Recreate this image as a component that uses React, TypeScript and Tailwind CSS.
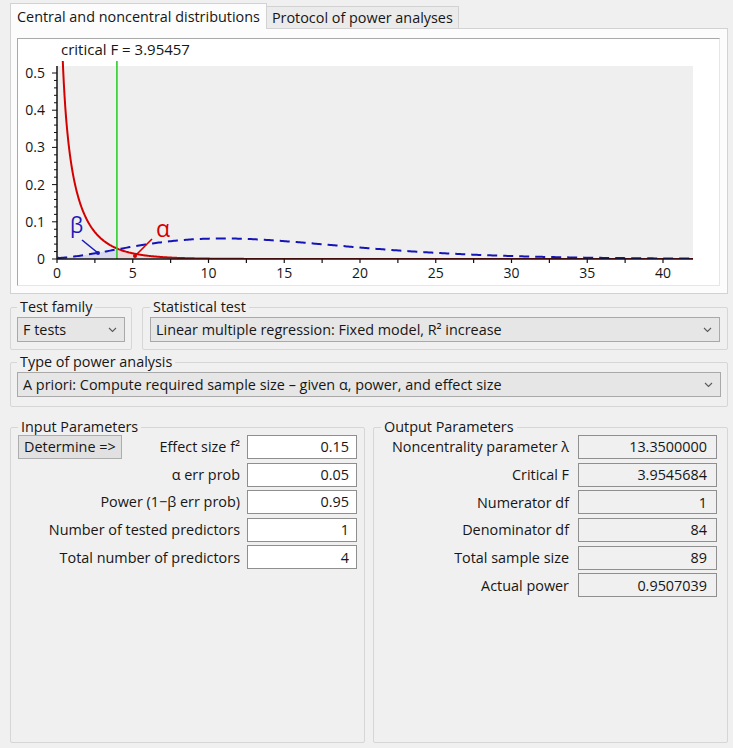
import React from "react";

// plot geometry (svg coords inside the chart box)
const X0 = 39;
const Y0 = 220;
const TOP = 27;
const RIGHT = 675;
const XS = 15.15;
const YS = 372;
const CRIT = 3.95457;

const lgamma = (z: number): number => {
  const c = [
    0.99999999999980993, 676.5203681218851, -1259.1392167224028, 771.32342877765313,
    -176.61502916214059, 12.507343278686905, -0.13857109526572012, 9.9843695780195716e-6,
    1.5056327351493116e-7,
  ];
  if (z < 0.5) return Math.log(Math.PI / Math.sin(Math.PI * z)) - lgamma(1 - z);
  z -= 1;
  let x = c[0];
  for (let i = 1; i < 9; i++) x += c[i] / (z + i);
  const t = z + 7.5;
  return 0.5 * Math.log(2 * Math.PI) + (z + 0.5) * Math.log(t) - t + Math.log(x);
};

const fPdf = (x: number, d1: number, d2: number) => {
  if (x <= 0) return 0;
  const lb = lgamma(d1 / 2) + lgamma(d2 / 2) - lgamma((d1 + d2) / 2);
  const l =
    (d1 / 2) * Math.log(d1 / d2) +
    (d1 / 2 - 1) * Math.log(x) -
    ((d1 + d2) / 2) * Math.log(1 + (d1 * x) / d2) -
    lb;
  return Math.exp(l);
};

const ncfPdf = (x: number, d1: number, d2: number, lam: number) => {
  let s = 0;
  for (let j = 0; j < 90; j++) {
    const lw = -lam / 2 + j * Math.log(lam / 2) - lgamma(j + 1);
    const k = d1 + 2 * j;
    s += Math.exp(lw) * (d1 / k) * fPdf((x * d1) / k, k, d2);
  }
  return s;
};

const px = (x: number) => X0 + x * XS;
const py = (y: number) => Y0 - y * YS;

const sample = (f: (x: number) => number, a: number, b: number, step: number) => {
  const pts: [number, number][] = [];
  for (let x = a; x <= b + 1e-9; x += step) pts.push([px(x), Math.max(py(f(x)), -50)]);
  return pts;
};

const toPath = (pts: [number, number][]) =>
  pts.map((p, i) => `${i ? "L" : "M"}${p[0].toFixed(2)},${p[1].toFixed(2)}`).join(" ");

const central = (x: number) => fPdf(x, 1, 84);
const noncentral = (x: number) => ncfPdf(x, 1, 84, 13.35);

const redPts = sample(central, 0.3, 42, 0.05);
const bluePts = sample(noncentral, 0.02, 42, 0.1);
const alphaPts = sample(central, CRIT, 42, 0.1);
const betaPts = sample(noncentral, 0.02, CRIT, 0.05);

const alphaArea = `${toPath(alphaPts)} L${px(42)},${Y0} L${px(CRIT)},${Y0} Z`;
const betaArea = `${toPath(betaPts)} L${px(CRIT)},${Y0} L${px(0.02)},${Y0} Z`;

const Chart = () => {
  const yTicks = Array.from({ length: 26 }, (_, i) => i * 0.02);
  const xTicks = Array.from({ length: 17 }, (_, i) => i * 2.5);
  return (
    <svg width="701" height="246" className="block">
      <defs>
        <clipPath id="plot">
          <rect x={X0} y={22} width={RIGHT - X0} height={Y0 - 22} />
        </clipPath>
      </defs>
      <text x="43" y="16" fontSize="15" fill="#161616" fontFamily="Open Sans">
        critical F = 3.95457
      </text>
      <rect x={X0} y={TOP} width={RIGHT - X0} height={Y0 - TOP} fill="#efefef" />
      <g clipPath="url(#plot)">
        <path d={alphaArea} fill="rgba(235,60,60,0.13)" />
        <path d={betaArea} fill="rgba(60,60,235,0.13)" />
        <path d={toPath(redPts)} fill="none" stroke="#d40000" strokeWidth="2" />
        <path d={toPath(bluePts)} fill="none" stroke="#1414b8" strokeWidth="2" strokeDasharray="10 6" />
      </g>
      <line x1={px(CRIT)} y1="22" x2={px(CRIT)} y2={Y0} stroke="#2ecc2e" strokeWidth="1.6" />
      {/* beta / alpha labels */}
      <text x="52" y="194" fontSize="21" fill="#1a1ab8" fontFamily="Open Sans">β</text>
      <line x1="64" y1="201" x2="80" y2="214" stroke="#1a1ab8" strokeWidth="1.6" />
      <circle cx="80" cy="214" r="2" fill="#1a1ab8" />
      <text x="138" y="198" fontSize="23" fill="#d40000" fontFamily="Open Sans">α</text>
      <line x1="134" y1="200" x2="117" y2="217" stroke="#d40000" strokeWidth="1.6" />
      <circle cx="117" cy="217" r="2" fill="#d40000" />
      {/* axes */}
      <line x1={X0} y1={TOP} x2={X0} y2={Y0} stroke="#111" strokeWidth="1.5" />
      <line x1={X0} y1={Y0} x2={RIGHT} y2={Y0} stroke="#111" strokeWidth="1.5" />
      {yTicks.map((v, i) => (
        <line
          key={i}
          x1={X0 - (i % 5 === 0 ? 5 : 3)}
          y1={py(v)}
          x2={X0}
          y2={py(v)}
          stroke="#111"
          strokeWidth="1"
        />
      ))}
      {[0, 0.1, 0.2, 0.3, 0.4, 0.5].map((v) => (
        <text key={v} x="27" y={py(v) + 5} fontSize="14" textAnchor="end" fill="#161616" fontFamily="Open Sans">
          {v === 0 ? "0" : v.toFixed(1)}
        </text>
      ))}
      {xTicks.map((v) => (
        <line key={v} x1={px(v)} y1={Y0} x2={px(v)} y2={Y0 + 4} stroke="#111" strokeWidth="1.2" />
      ))}
      {[0, 5, 10, 15, 20, 25, 30, 35, 40].map((v) => (
        <text key={v} x={px(v)} y="239" fontSize="14" textAnchor="middle" fill="#161616" fontFamily="Open Sans">
          {v}
        </text>
      ))}
    </svg>
  );
};

const Chevron = () => (
  <svg width="9" height="6" viewBox="0 0 9 6" className="shrink-0">
    <polyline points="1,1 4.5,4.5 8,1" fill="none" stroke="#5a5a5a" strokeWidth="1.1" />
  </svg>
);

const Combo = ({ text }: { text: string }) => (
  <div className="mt-[1px] h-[25px] flex items-center justify-between pl-[5px] pr-[7px] bg-[#e6e6e6] border border-[#a9a9a9] whitespace-nowrap">
    <span>{text}</span>
    <Chevron />
  </div>
);

const Group = ({ title, className, children }: { title: string; className?: string; children: React.ReactNode }) => (
  <fieldset className={`border border-[#d6d6d6] rounded-[2px] ${className ?? ""}`}>
    <legend className="px-[3px] leading-[18px]">{title}</legend>
    {children}
  </fieldset>
);

const inputs = [
  ["Effect size f²", "0.15"],
  ["α err prob", "0.05"],
  ["Power (1−β err prob)", "0.95"],
  ["Number of tested predictors", "1"],
  ["Total number of predictors", "4"],
];

const outputs = [
  ["Noncentrality parameter λ", "13.3500000"],
  ["Critical F", "3.9545684"],
  ["Numerator df", "1"],
  ["Denominator df", "84"],
  ["Total sample size", "89"],
  ["Actual power", "0.9507039"],
];

export default function App() {
  return (
    <div className="w-[733px] h-[748px] bg-[#f0f0f0] pl-[10px] pr-[5px] pt-[3px] font-['Open_Sans',sans-serif] text-[14.4px] text-[#161616] overflow-hidden">
      {/* tabs */}
      <div className="flex items-end h-[25px]">
        <div className="relative z-10 -mb-px h-[26px] px-[6px] flex items-center border border-b-0 border-[#d2d2d2] bg-[#fcfcfc] whitespace-nowrap">
          Central and noncentral distributions
        </div>
        <div className="h-[22px] px-[5px] flex items-center border border-b-0 border-l-0 border-[#d2d2d2] bg-[#ebebeb] whitespace-nowrap">
          Protocol of power analyses
        </div>
      </div>
      <div className="h-[266px] border border-[#d2d2d2] bg-[#fcfcfc] pl-[6px] pt-[9px]">
        <div className="w-[703px] h-[248px] bg-white border-t border-l border-[#a9a9a9] border-r border-b border-r-[#e6e6e6] border-b-[#e6e6e6]">
          <Chart />
        </div>
      </div>

      {/* test selection */}
      <div className="mt-[4px] flex gap-[10px]">
        <Group title="Test family" className="w-[122px] px-[6px] pb-[7px]">
          <Combo text="F tests" />
        </Group>
        <Group title="Statistical test" className="flex-1 px-[7px] pb-[7px]">
          <Combo text="Linear multiple regression: Fixed model, R² increase" />
        </Group>
      </div>
      <Group title="Type of power analysis" className="mt-[3px] px-[6px] pb-[9px]">
        <Combo text="A priori: Compute required sample size – given α, power, and effect size" />
      </Group>

      {/* parameters */}
      <div className="mt-[11px] h-[325px] grid grid-cols-2 gap-[8px]">
        <Group title="Input Parameters" className="pl-[7px] pr-[7px]">
          <div className="flex flex-col gap-[3.6px] -mt-[1px]">
            {inputs.map(([label, value], i) => (
              <div key={label} className="flex items-center h-[24px]">
                {i === 0 && (
                  <div className="h-[24px] px-[5px] flex items-center bg-[#e1e1e1] border border-[#adadad] whitespace-nowrap">
                    Determine =&gt;
                  </div>
                )}
                <div className="flex-1 text-right pr-[7px] whitespace-nowrap">{label}</div>
                <div className="w-[110px] h-[24px] flex items-center justify-end pr-[7px] bg-white border border-[#8f8f8f]">
                  {value}
                </div>
              </div>
            ))}
          </div>
        </Group>
        <Group title="Output Parameters" className="pl-[7px] pr-[10px]">
          <div className="flex flex-col gap-[3.7px] -mt-[1px]">
            {outputs.map(([label, value]) => (
              <div key={label} className="flex items-center h-[24px]">
                <div className="flex-1 text-right pr-[9px] whitespace-nowrap">{label}</div>
                <div className="w-[139px] h-[24px] flex items-center justify-end pr-[9px] bg-[#f0f0f0] border border-[#8f8f8f]">
                  {value}
                </div>
              </div>
            ))}
          </div>
        </Group>
      </div>
    </div>
  );
}
